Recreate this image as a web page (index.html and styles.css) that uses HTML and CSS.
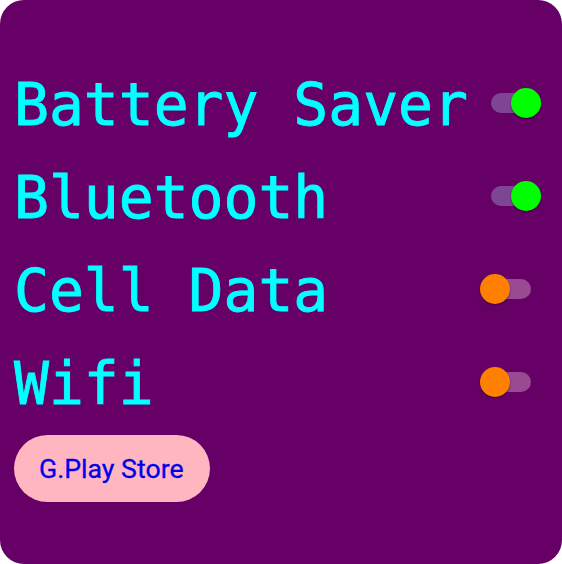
FILE: index.html
```html
<!DOCTYPE html>
<html>
<head>
<meta charset="utf-8">
<link rel="stylesheet" href="styles.css">
</head>
<body>
<div class="screen">
  <div class="row">
    <span class="label">Battery Saver</span>
    <span class="switch on"><span class="track"></span><span class="thumb"></span></span>
  </div>
  <div class="row">
    <span class="label">Bluetooth</span>
    <span class="switch on"><span class="track"></span><span class="thumb"></span></span>
  </div>
  <div class="row">
    <span class="label">Cell Data</span>
    <span class="switch off"><span class="track"></span><span class="thumb"></span></span>
  </div>
  <div class="row">
    <span class="label">Wifi</span>
    <span class="switch off"><span class="track"></span><span class="thumb"></span></span>
  </div>
  <div class="actions">
    <button class="store">G.Play Store</button>
  </div>
</div>
</body>
</html>
```

FILE: styles.css
```css
html, body {
  margin: 0;
  padding: 0;
  background: #ffffff;
}
.screen {
  width: 562px;
  height: 564px;
  box-sizing: border-box;
  background: #660066;
  border-radius: 24px;
  padding: 56px 0 0 14px;
  display: flex;
  flex-direction: column;
  overflow: hidden;
}
.row {
  height: 93px;
  display: flex;
  align-items: center;
  justify-content: space-between;
  padding-right: 20px;
}
.label {
  font-family: "DejaVu Sans Mono", monospace;
  font-size: 58px;
  color: #00ffff;
  -webkit-text-stroke: 0.9px #00ffff;
  white-space: nowrap;
  position: relative;
  top: 2px;
}
.switch {
  position: relative;
  width: 62px;
  height: 32px;
  flex: none;
}
.track {
  position: absolute;
  left: 11px;
  top: 6px;
  width: 40px;
  height: 20px;
  border-radius: 10px;
}
.thumb {
  position: absolute;
  top: 1px;
  width: 30px;
  height: 30px;
  border-radius: 50%;
  box-shadow: 0 1px 2px rgba(0,0,0,0.45);
}
.switch.on .track { background: #7e4594; }
.switch.on .thumb { left: 31px; background: #00ff00; }
.switch.off .track { background: #9a4a93; }
.switch.off .thumb { left: 0; background: #ff8000; }
.actions {
  padding-top: 7px;
  display: flex;
}
.store {
  height: 67px;
  padding: 0 26px 0 25px;
  border: none;
  border-radius: 34px;
  background: #ffb6c1;
  color: #0000ee;
  font-family: Roboto, sans-serif;
  font-size: 26.7px;
  font-weight: 400;
  -webkit-text-stroke: 0.3px #0000ee;
}
```
